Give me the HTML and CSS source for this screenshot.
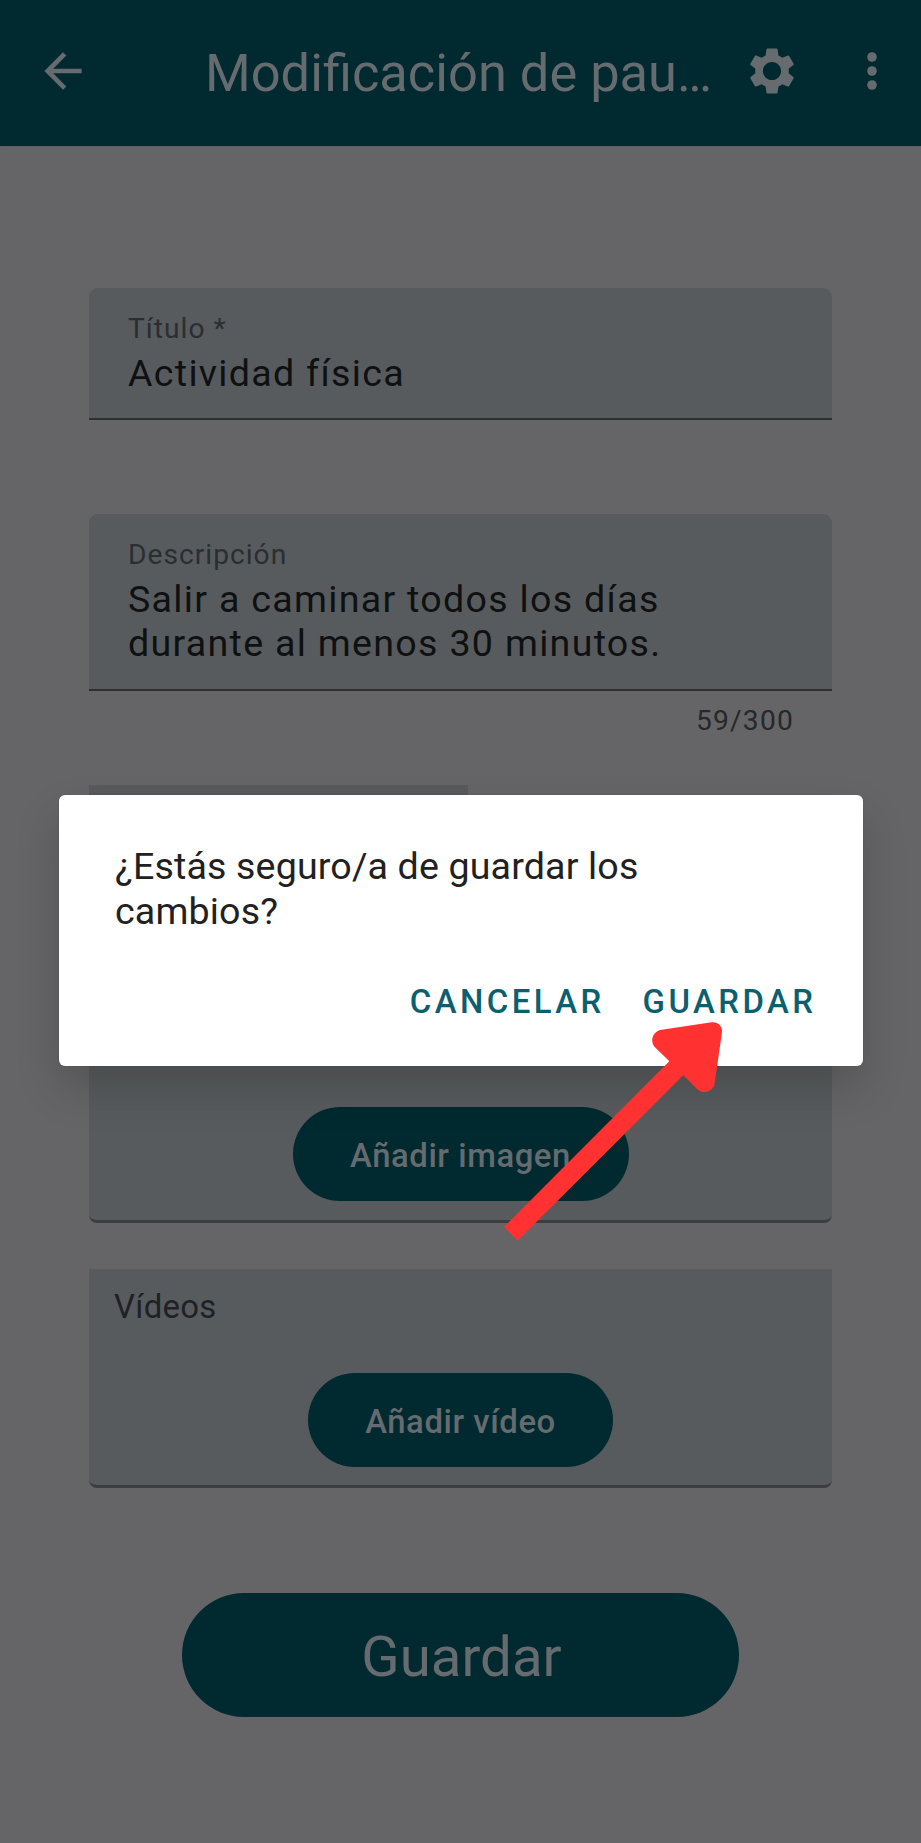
FILE: index.html
```html
<!DOCTYPE html>
<html lang="es">
<head>
<meta charset="utf-8">
<title>Modificación de pauta</title>
<link rel="stylesheet" href="styles.css">
</head>
<body>
<header class="appbar">
  <svg class="icon back" viewBox="0 0 24 24"><path d="M20 11H7.83l5.59-5.59L12 4l-8 8 8 8 1.41-1.41L7.83 13H20v-2z"/></svg>
  <h1 class="title">Modificación de pau…</h1>
  <svg class="icon gear" viewBox="0 0 24 24"><path d="M19.14 12.94c.04-.3.06-.61.06-.94 0-.32-.02-.64-.07-.94l2.03-1.58c.18-.14.23-.41.12-.61l-1.92-3.32c-.12-.22-.37-.29-.59-.22l-2.39.96c-.5-.38-1.03-.7-1.62-.94l-.36-2.54c-.04-.24-.24-.41-.48-.41h-3.84c-.24 0-.43.17-.47.41l-.36 2.54c-.59.24-1.13.57-1.62.94l-2.39-.96c-.22-.08-.47 0-.59.22L2.74 8.87c-.12.21-.08.47.12.61l2.03 1.58c-.05.3-.09.63-.09.94s.02.64.07.94l-2.03 1.58c-.18.14-.23.41-.12.61l1.92 3.32c.12.22.37.29.59.22l2.39-.96c.5.38 1.03.7 1.62.94l.36 2.54c.05.24.24.41.48.41h3.84c.24 0 .44-.17.47-.41l.36-2.54c.59-.24 1.13-.56 1.62-.94l2.39.96c.22.08.47 0 .59-.22l1.92-3.32c.12-.22.07-.47-.12-.61l-2.01-1.58zM12 15.9c-2.15 0-3.9-1.75-3.9-3.9s1.75-3.9 3.9-3.9 3.9 1.75 3.9 3.9-1.75 3.9-3.9 3.9z"/></svg>
  <svg class="icon more" viewBox="0 0 24 24"><circle cx="12" cy="6" r="2.05"/><circle cx="12" cy="12" r="2.05"/><circle cx="12" cy="18" r="2.05"/></svg>
</header>
<main class="form">
  <div class="field">
    <div class="label">Título *</div>
    <div class="value">Actividad física</div>
  </div>
  <div class="field description">
    <div class="label">Descripción</div>
    <div class="value">Salir a caminar todos los días<br>durante al menos 30 minutos.</div>
  </div>
  <div class="counter">59/300</div>
  <div class="select"></div>
  <section class="card images">
    <button class="pill">Añadir imagen</button>
  </section>
  <section class="card videos">
    <h2 class="heading">Vídeos</h2>
    <button class="pill pill-video">Añadir vídeo</button>
  </section>
  <button class="save">Guardar</button>
</main>
<div class="dialog" role="dialog">
  <p class="message">¿Estás seguro/a de guardar los<br>cambios?</p>
  <div class="actions">
    <button class="action cancel">CANCELAR</button>
    <button class="action confirm">GUARDAR</button>
  </div>
</div>
<svg class="pointer" viewBox="0 0 1353 960"><path d="M102 861L143 902L640 406L681 447C699 464 730 457 734 430L756 277C758 258 743 244 725 247L575 269C548 273 538 303 555 322L598 364Z"/></svg>
</body>
</html>
```
FILE: styles.css
```css
* { box-sizing: border-box; margin: 0; padding: 0; }
body {
  position: relative;
  width: 921px;
  height: 1843px;
  overflow: hidden;
  background: #656567;
  font-family: Roboto, "Noto Sans", sans-serif;
}
button { border: 0; font-family: inherit; }

.appbar {
  display: flex;
  align-items: center;
  height: 145.5px;
  padding: 0 20px 4px 35px;
  background: #002930;
  box-shadow: 0 1px 2px #5c605f;
}
.icon { flex: none; width: 56px; height: 56px; fill: #656b6e; }
.title {
  width: 508px;
  margin-left: 112px;
  padding: 4px 0 0 2px;
  font-size: 52.4px;
  line-height: 60px;
  font-weight: 400;
  color: #656b6e;
  white-space: nowrap;
}
.gear { margin-left: 33px; }
.more { margin-left: 44px; }

.form { display: flex; flex-direction: column; padding: 142.9px 89px 0; }
.field {
  width: 743px;
  height: 131.6px;
  padding: 24px 39px 0;
  background: #585b5d;
  border-bottom: 2.5px solid #2c3033;
  border-radius: 9px 9px 0 0;
}
.label { font-size: 28.2px; line-height: 34px; letter-spacing: 1px; color: #2a2e31; }
.value { padding-top: 4.6px; font-size: 37.6px; line-height: 44.5px; letter-spacing: 1.3px; color: #0e1012; white-space: nowrap; }
.description { height: 177px; margin-top: 94px; }
.counter {
  align-self: flex-end;
  margin-right: 38px;
  font-size: 28.2px;
  line-height: 34px;
  padding-top: 13px;
  height: 94px;
  letter-spacing: 1.2px;
  color: #26282a;
}
.select { width: 379px; height: 60px; background: #585a5c; }
.card {
  display: flex;
  flex-direction: column;
  align-items: center;
  width: 743px;
  background: #585b5d;
  border-bottom: 3px solid #3b3d40;
  border-radius: 0 0 8px 8px;
}
.images { height: 217.5px; margin-top: 161px; padding-top: 101px; }
.videos { height: 219px; margin-top: 46px; }
.heading {
  align-self: flex-start;
  margin: 18px 0 0 25px;
  font-size: 32.9px;
  line-height: 39px;
  font-weight: 400;
  letter-spacing: .3px;
  color: #1f2124;
}
.pill {
  flex: none;
  width: 336px;
  height: 94.5px;
  padding-top: 3px;
  border-radius: 48px;
  background: #002930;
  color: #656b6e;
  font-size: 32.9px;
  font-weight: 500;
  letter-spacing: .55px;
}
.pill-video { width: 305px; margin-top: 46.5px; }
.save {
  align-self: center;
  width: 557px;
  height: 124px;
  margin-top: 104.5px;
  border-radius: 62px;
  background: #002930;
  color: #656b6e;
  font-size: 56.4px;
  padding: 5px 0 0 2px;
}

/* Confirmation dialog above the dimmed form */
.dialog {
  position: absolute;
  left: 58.5px;
  top: 795.3px;
  width: 804px;
  height: 270.5px;
  padding: 49px 46px 0 56.5px;
  border-radius: 6px;
  background: #fff;
  box-shadow: 0 22px 44px rgba(0, 0, 0, .17), 0 0 2px rgba(0, 0, 0, .15);
}
.message { font-size: 37.6px; line-height: 44.6px; letter-spacing: .15px; color: #212121; white-space: nowrap; }
.actions { display: flex; justify-content: flex-end; gap: 38px; margin-top: 49px; }
.action { background: none; color: #0b6070; font-size: 32.9px; line-height: 40px; font-weight: 500; letter-spacing: 3.45px; }

.pointer { position: absolute; left: 470px; top: 940px; width: 451px; height: 320px; fill: #ff3131; }
```
